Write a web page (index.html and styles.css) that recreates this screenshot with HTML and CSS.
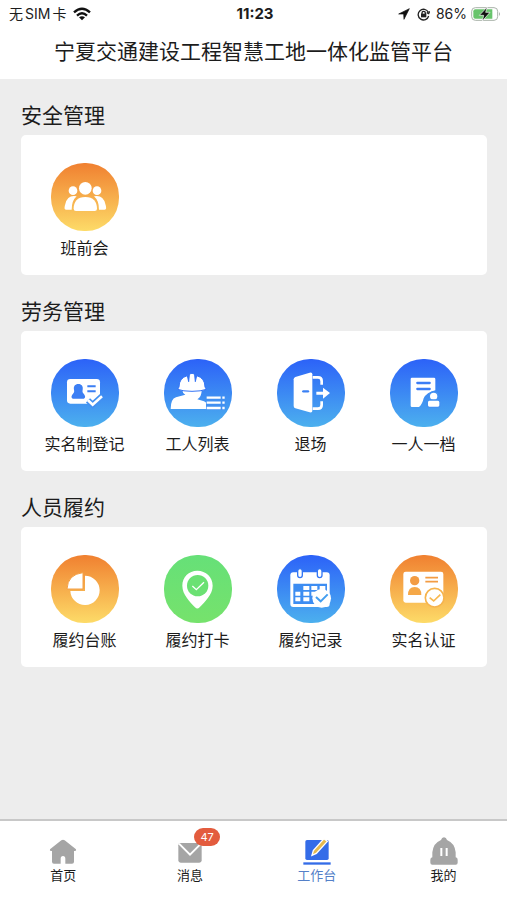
FILE: index.html
```html
<!DOCTYPE html>
<html lang="zh-CN">

<head>
    <meta charset="UTF-8">
    <meta name="viewport" content="width=device-width, initial-scale=1.0">
    <title>宁夏交通建设工程智慧工地一体化监管平台</title>
    <link rel="stylesheet" href="styles.css">
</head>

<body>
    <header class="header">
        <div class="status">
            <div class="status-left">
                <div class="carrier"><span>无</span><span>SIM</span><span>卡</span></div>
                <svg width="18" height="14" viewBox="0 0 54 42" fill="none" stroke="#111" stroke-width="7">
                    <path d="M3 16Q27-6 51 16" />
                    <path d="M12 26Q27 12 42 26" />
                    <path d="M18 31Q27 24 36 31L27 40z" fill="#111" stroke="none" />
                </svg>
            </div>
            <b class="time">11:23</b>
            <div class="status-right">
                <svg width="12" height="12" viewBox="0 0 36 36">
                    <path d="M34 2L2 18h15l1 16z" fill="#111" stroke="#111" stroke-width="2" />
                </svg>
                <svg class="lock" width="13" height="13" viewBox="0 0 39 39" fill="none" stroke="#222" stroke-width="4">
                    <path d="M34 13A16 16 0 1 0 35 24M29 14l6 3 3-7" />
                    <path d="M15 18v-3a5 5 0 0 1 10 0v3" />
                    <rect x="12" y="17" width="16" height="11" fill="#222" stroke="none" />
                </svg>
                <span>86%</span>
                <svg width="30" height="14" viewBox="0 0 90 42">
                    <rect x="2" y="2" width="78" height="38" rx="11" fill="#fff" stroke="#a9b2a9" stroke-width="3" />
                    <path d="M13 7h51v28H13a6 6 0 0 1-6-6V13a6 6 0 0 1 6-6z" fill="#68c46c" />
                    <path d="M84 15q6 6 0 12z" fill="#a9b2a9" />
                    <path d="M49 0L25 25h13l-4 17 23-26H44z" fill="#111" stroke="#fff" stroke-width="2" />
                </svg>
            </div>
        </div>
        <h1 class="title">宁夏交通建设工程智慧工地一体化监管平台</h1>
    </header>

    <main class="main">
        <section>
            <h2>安全管理</h2>
            <div class="card">
                <a class="item" href="#">
                    <svg class="icon orange" viewBox="0 0 204 204" fill="#fff">
                        <circle cx="103" cy="76" r="19" />
                        <circle cx="66" cy="83" r="13" />
                        <circle cx="138" cy="83" r="13" />
                        <path d="M77 100q-27-6-34 23-6 17 2 17h17q0-27 15-40zM129 100q27-6 34 23 6 17-2 17h-17q0-27-15-40z" />
                        <path d="M103 102c-24 0-35 14-35 35q0 7 7 7h56q7 0 7-7c0-21-11-35-35-35z" />
                    </svg>
                    <span>班前会</span>
                </a>
            </div>
        </section>

        <section>
            <h2>劳务管理</h2>
            <div class="card">
                <a class="item" href="#">
                    <svg class="icon blue" viewBox="0 0 204 204" fill="#fff">
                        <path d="M58 60h79q10 0 10 10v38l-22 26H58q-10 0-10-10V70q0-10 10-10z" />
                        <path d="M82 75c-10 0-15 7-13 17 1 6 1 8-3 12-7 8-5 15 2 15h28c7 0 9-7 2-15-4-4-4-6-3-12 2-10-3-17-13-17z" fill="#3c7ff4" />
                        <path d="M109 82h25M109 97h25" stroke="#3c7ff4" stroke-width="6" />
                        <path d="M111 124l14 13 28-25" fill="none" stroke="#4290f1" stroke-width="18" />
                        <path d="M111 124l14 13 28-25" fill="none" stroke="#fff" stroke-width="8" />
                    </svg>
                    <span>实名制登记</span>
                </a>
                <a class="item" href="#">
                    <svg class="icon blue" viewBox="0 0 204 204" fill="#fff">
                        <path d="M55 94h58q0 20-13 27l20 6q7 3 9 8v15H20q0-30 16-35l28-8q-9-5-9-13z" />
                        <path d="M45 84q0-27 25-34l4 18 2-20q0-5 8-5t8 5l2 20 4-18q25 7 25 34l4 7q-16 6-43 6t-43-6z" stroke="#3474f5" stroke-width="3" />
                        <path d="M126 111h58v42h-58z" fill="#4290f1" />
                        <path d="M128 116h42M128 131h42M128 147h42M175 116h7M175 131h7M175 147h7" stroke="#fff" stroke-width="7" />
                    </svg>
                    <span>工人列表</span>
                </a>
                <a class="item" href="#">
                    <svg class="icon blue" viewBox="0 0 204 204" fill="#fff">
                        <path d="M55 54l43-13q8-2 8 5v109q0 7-8 5l-43-12q-5-2-5-7V61q0-5 5-7z" />
                        <path d="M79 97h14" stroke="#3a80f4" stroke-width="7" stroke-linecap="round" />
                        <path d="M107 55h16q11 0 11 11v11M107 149h16q11 0 11-11v-11" fill="none" stroke="#fff" stroke-width="8" />
                        <path d="M118 98h20V86l21 16-21 17v-12h-20z" />
                    </svg>
                    <span>退场</span>
                </a>
                <a class="item" href="#">
                    <svg class="icon blue" viewBox="0 0 204 204" fill="#fff">
                        <path d="M66 56h66q4 0 4 4v34q-26 6-35 24-4 18-14 26H66q-4 0-4-4V60q0-4 4-4z" />
                        <path d="M82 72h37M82 90h37" stroke="#3c7df5" stroke-width="7" stroke-linecap="round" />
                        <g stroke="#4391f1" stroke-width="4">
                            <circle cx="131" cy="112" r="13" />
                            <path d="M118 123h26q6 0 6 7v9q0 6-6 6h-26q-6 0-6-6v-9q0-7 6-7z" />
                        </g>
                    </svg>
                    <span>一人一档</span>
                </a>
            </div>
        </section>

        <section>
            <h2>人员履约</h2>
            <div class="card">
                <a class="item" href="#">
                    <svg class="icon orange" viewBox="0 0 204 204" fill="#fff">
                        <path d="M102 62a44 44 0 1 1-44 46h44z" />
                        <path d="M96 53v49H48q2-44 48-49z" stroke="#f3a046" stroke-width="3" />
                    </svg>
                    <span>履约台账</span>
                </a>
                <a class="item" href="#">
                    <svg class="icon green" viewBox="0 0 204 204" fill="#fff">
                        <path d="M100 47c-26 0-45 19-45 45 0 27 23 48 38 65q7 7 14 0c15-17 39-38 39-65 0-26-20-45-46-45z" />
                        <circle cx="101" cy="92" r="32" fill="#6be173" />
                        <path d="M85 93l12 11 23-22" fill="none" stroke="#fff" stroke-width="4" />
                    </svg>
                    <span>履约打卡</span>
                </a>
                <a class="item" href="#">
                    <svg class="icon blue" viewBox="0 0 204 204" fill="#fff">
                        <rect x="40" y="52" width="118" height="104" rx="9" />
                        <path d="M49 86h101v61H49z" fill="#3d8df2" />
                        <path d="M79 93h18v12H79zM103 93h18v12h-18zM128 93h17v12h-17zM55 110h15v12H55zM79 110h18v12H79zM103 110h18v12h-18zM55 127h15v12H55zM79 127h18v12H79z" />
                        <rect x="62" y="41" width="14" height="27" rx="7" stroke="#3477f5" stroke-width="4" />
                        <rect x="121" y="41" width="14" height="27" rx="7" stroke="#3477f5" stroke-width="4" />
                        <circle cx="134" cy="130" r="28" />
                        <path d="M117 126l14 13 21-21" fill="none" stroke="#429df0" stroke-width="6" />
                    </svg>
                    <span>履约记录</span>
                </a>
                <a class="item" href="#">
                    <svg class="icon orange" viewBox="0 0 204 204" fill="#fff">
                        <rect x="40" y="50" width="120" height="93" rx="7" />
                        <circle cx="74" cy="77" r="14" fill="#f39c43" />
                        <path d="M54 120q0-24 20-24t20 24z" fill="#f5a848" />
                        <path d="M106 68h38M106 80h38" stroke="#f39c43" stroke-width="5" />
                        <circle cx="134" cy="128" r="28" stroke="#f6b44e" stroke-width="5" />
                        <path d="M119 128l12 10 20-19" fill="none" stroke="#f8b84f" stroke-width="5" />
                    </svg>
                    <span>实名认证</span>
                </a>
            </div>
        </section>
    </main>

    <nav class="tabbar">
        <a class="tab" href="#">
            <svg width="28" height="28" viewBox="0 0 84 84" fill="#a5a5a5">
                <path d="M37 10q5-4 10 0l34 27q2 5-3 5h-3v32q0 6-6 6H49V65q0-8-7-8t-7 8v15H15q-6 0-6-6V42H6q-5 0-3-5z" />
            </svg>
            <span>首页</span>
        </a>
        <a class="tab" href="#">
            <svg width="28" height="28" viewBox="0 0 84 84" fill="#a5a5a5">
                <path d="M14 18h56q7 0 7 7v45q0 7-7 7H14q-7 0-7-7V25q0-7 7-7z" />
                <path d="M9 20l33 33 33-33" fill="none" stroke="#fff" stroke-width="6" />
            </svg>
            <span>消息</span>
            <span class="badge">47</span>
        </a>
        <a class="tab active" href="#">
            <svg width="28" height="28" viewBox="0 0 84 84">
                <rect x="7" y="9" width="70" height="60" rx="5" fill="#346ce8" />
                <path d="M1 76h82v7H1z" fill="#346ce8" />
                <path d="M63 5l10 8-33 36-13 6 4-14z" fill="#e5b94e" stroke="#fff" stroke-width="4" />
            </svg>
            <span>工作台</span>
        </a>
        <a class="tab" href="#">
            <svg width="28" height="28" viewBox="0 0 84 84" fill="#a5a5a5">
                <path d="M33 9q2-8 9-8t9 8q23 9 26 37v15q6 1 6 7v9q0 6-6 6H7q-6 0-6-6v-9q0-6 6-7V46Q10 18 33 9z" />
                <path d="M34 33v24M50 33v24" stroke="#fff" stroke-width="6" />
            </svg>
            <span>我的</span>
        </a>
    </nav>
</body>

</html>
```
FILE: styles.css
```css
* {
    box-sizing: border-box;
}

body {
    display: flex;
    flex-direction: column;
    min-height: 100vh;
    margin: 0;
    background-color: #ededed;
    color: #1c1c1c;
    font-family: Inter, "Noto Sans CJK SC", sans-serif;
}

a {
    color: inherit;
    text-decoration: none;
}

svg {
    display: block;
}

.header {
    background-color: #fff;
}

.status {
    display: grid;
    grid-template-columns: 1fr auto 1fr;
    align-items: center;
    height: 28px;
    padding: 0 6px 0 9px;
    font-size: 14px;
    line-height: 20px;
}

.status-left,
.status-right {
    display: flex;
    align-items: center;
}

.status-left {
    gap: 7px;
}

.status-right {
    justify-content: flex-end;
    gap: 4px;
}

.carrier {
    display: flex;
    gap: 2px;
}

.lock {
    margin: 0 2px 0 3px;
}

.time {
    font-size: 15px;
}

.title {
    margin: 0;
    padding-bottom: 3px;
    font-size: 21px;
    font-weight: 400;
    line-height: 48px;
    text-align: center;
    white-space: nowrap;
}

.main {
    flex: 1;
    padding: 0 20px 20px 21px;
}

h2 {
    margin: 0;
    padding: 21px 0 3px;
    font-size: 21px;
    font-weight: 400;
    line-height: 32px;
}

.card {
    display: grid;
    grid-template-columns: repeat(4, 1fr);
    padding: 28px 7px 15px;
    border-radius: 5px;
    background-color: #fff;
}

.item {
    display: flex;
    flex-direction: column;
    align-items: center;
    gap: 5px;
    font-size: 16px;
    line-height: 24px;
}

.icon {
    width: 68px;
    height: 68px;
    border-radius: 33px;
}

.orange {
    background: linear-gradient(#f08030, #fddb68);
}

.blue {
    background: linear-gradient(#2c62f8, #4cb0ee);
}

.green {
    background: linear-gradient(#66e078, #76e26c);
}

.tabbar {
    display: grid;
    grid-template-columns: repeat(4, 1fr);
    height: 81px;
    padding-top: 16px;
    border-top: 2px solid #c8c8c8;
    background-color: #fff;
}

.tab {
    position: relative;
    display: flex;
    flex-direction: column;
    align-items: center;
    font-size: 13px;
    line-height: 20px;
}

.active {
    color: #5480c8;
}

.badge {
    position: absolute;
    top: -9px;
    left: 50%;
    width: 26px;
    margin-left: 4px;
    border-radius: 9px;
    background-color: #e35c3e;
    color: #fff;
    font-size: 11px;
    line-height: 18px;
    text-align: center;
}
```
